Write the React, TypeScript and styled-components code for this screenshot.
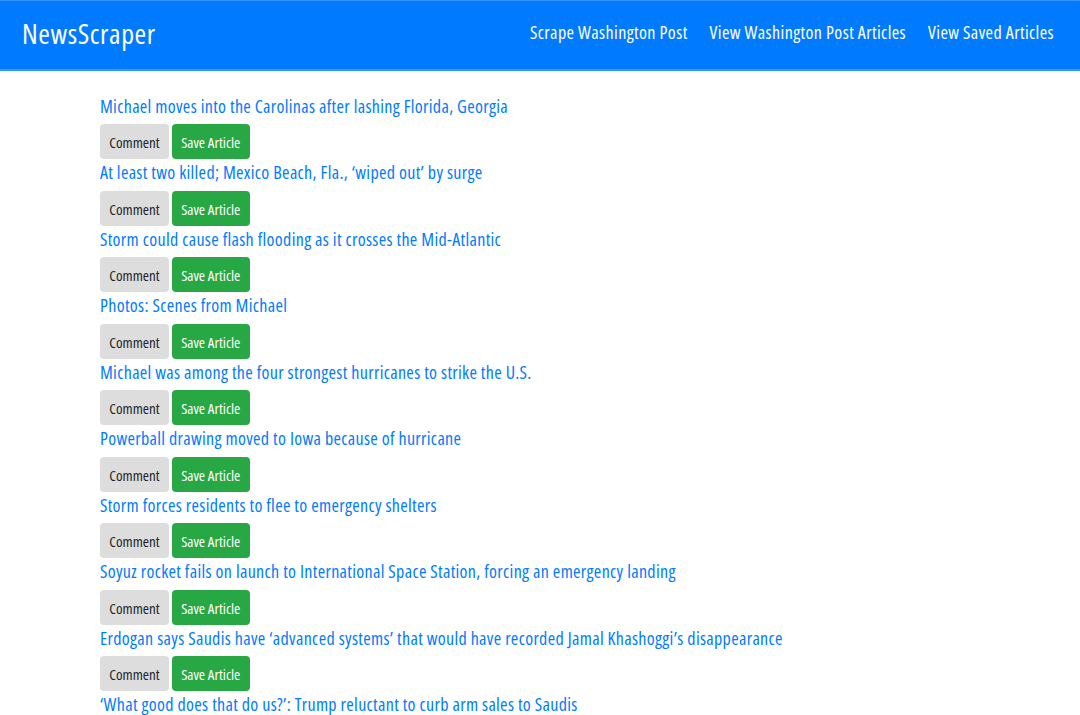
import React from "react";
import styled, { createGlobalStyle } from "styled-components";

const GlobalStyle = createGlobalStyle`
  html, body { margin: 0; padding: 0; background: #ffffff; }
  body {
    font-family: "Open Sans", "Noto Sans", "Liberation Sans", sans-serif;
    font-stretch: 75%;
    color: #212529;
  }
`;

const Navbar = styled.nav`
  box-sizing: border-box;
  height: 71px;
  background: #007bff;
  border-top: 1px solid #3d95ff;
  border-bottom: 2px solid #3d95ff;
  display: flex;
  align-items: center;
  justify-content: space-between;
  padding: 0 26px 0 22px;
`;

const Brand = styled.a`
  color: #ffffff;
  font-size: 28px;
  letter-spacing: 0.6px;
  text-decoration: none;
  line-height: 1;
  margin-top: -4px;
`;

const NavLinks = styled.div`
  display: flex;
  gap: 22px;
  margin-top: -6px;
`;

const NavLink = styled.a`
  color: #ffffff;
  font-size: 18px;
  letter-spacing: 0.4px;
  text-decoration: none;
  line-height: 1;
`;

const List = styled.main`
  padding: 21.5px 0 0 100px;
`;

const Item = styled.section`
  display: flex;
  flex-direction: column;
  align-items: flex-start;
`;

const Title = styled.a`
  color: #007bff;
  font-size: 18px;
  letter-spacing: 0.33px;
  line-height: 27px;
  margin-bottom: 4.5px;
  text-decoration: none;
`;

const Actions = styled.div`
  display: flex;
  gap: 3px;
`;

const Button = styled.button<{ $variant: "comment" | "save" }>`
  box-sizing: border-box;
  height: 35px;
  padding: 1px 9.3px 0;
  border: none;
  border-radius: 4px;
  font-family: inherit;
  font-stretch: 75%;
  font-size: 15px;
  line-height: 34px;
  cursor: pointer;
  background: ${(p) => (p.$variant === "save" ? "#28a745" : "#dddddd")};
  color: ${(p) => (p.$variant === "save" ? "#ffffff" : "#212529")};
`;

const articles = [
  "Michael moves into the Carolinas after lashing Florida, Georgia",
  "At least two killed; Mexico Beach, Fla., \u2018wiped out\u2019 by surge",
  "Storm could cause flash flooding as it crosses the Mid-Atlantic",
  "Photos: Scenes from Michael",
  "Michael was among the four strongest hurricanes to strike the U.S.",
  "Powerball drawing moved to Iowa because of hurricane",
  "Storm forces residents to flee to emergency shelters",
  "Soyuz rocket fails on launch to International Space Station, forcing an emergency landing",
  "Erdogan says Saudis have \u2018advanced systems\u2019 that would have recorded Jamal Khashoggi\u2019s disappearance",
  "\u2018What good does that do us?\u2019: Trump reluctant to curb arm sales to Saudis",
];

export default function App() {
  return (
    <>
      <GlobalStyle />
      <Navbar>
        <Brand href="#">NewsScraper</Brand>
        <NavLinks>
          <NavLink href="#">Scrape Washington Post</NavLink>
          <NavLink href="#">View Washington Post Articles</NavLink>
          <NavLink href="#">View Saved Articles</NavLink>
        </NavLinks>
      </Navbar>
      <List>
        {articles.map((title, i) => (
          <Item key={i}>
            <Title href="#">{title}</Title>
            {i < articles.length - 1 && (
              <Actions>
                <Button $variant="comment">Comment</Button>
                <Button $variant="save">Save Article</Button>
              </Actions>
            )}
          </Item>
        ))}
      </List>
    </>
  );
}
